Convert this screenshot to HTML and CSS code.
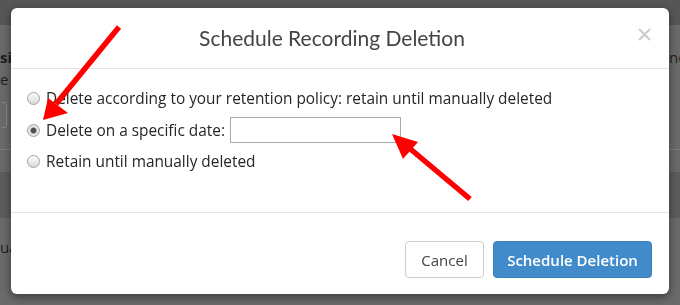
FILE: index.html
```html
<!DOCTYPE html>
<html lang="en">
<head>
<meta charset="utf-8">
<title>Schedule Recording Deletion</title>
<link rel="stylesheet" href="styles.css">
</head>
<body>
<div class="page">
  <div class="navbar"></div>
  <div class="section">
    <div class="row row-head"><span class="bold">sibility</span><span class="peek">nc</span></div>
    <div class="row row-sub"><span>e options</span></div>
    <div class="row row-field"><span class="fake-input"></span></div>
    <div class="rule"></div>
    <div class="band"></div>
    <div class="row row-foot"><span>ual</span></div>
  </div>
</div>

<div class="modal" role="dialog">
  <div class="modal-header">
    <h4 class="modal-title">Schedule Recording Deletion</h4>
    <button class="close" type="button" aria-label="Close">
      <svg viewBox="0 0 13 13" width="13" height="13"><path d="M1 1 L12 12 M12 1 L1 12" stroke="#cbcbcb" stroke-width="2" fill="none"/></svg>
    </button>
  </div>
  <div class="modal-body">
    <label class="opt"><input class="radio" type="radio" name="del"><span>Delete according to your retention policy: retain until manually deleted</span></label>
    <label class="opt opt-date"><input class="radio" type="radio" name="del" checked><span>Delete on a specific date:</span><input class="date" type="text"></label>
    <label class="opt"><input class="radio" type="radio" name="del"><span>Retain until manually deleted</span></label>
  </div>
  <div class="modal-footer">
    <button class="btn btn-default" type="button">Cancel</button>
    <button class="btn btn-primary" type="button">Schedule Deletion</button>
  </div>
</div>

<svg class="arrows" width="680" height="305" viewBox="0 0 680 305">
  <line x1="119" y1="27" x2="56" y2="104" stroke="#ff0000" stroke-width="5.5"/>
  <polygon points="43,120 48,98 68,113" fill="#ff0000"/>
  <line x1="470" y1="199" x2="408" y2="147" stroke="#ff0000" stroke-width="5.5"/>
  <polygon points="392,134 418,142 403,159" fill="#ff0000"/>
</svg>
</body>
</html>
```
FILE: styles.css
```css
html, body {
  margin: 0;
  padding: 0;
}
body {
  width: 680px;
  height: 305px;
  overflow: hidden;
  background: #6a6a6a;
  font-family: "Open Sans", Lato, sans-serif;
}

/* dimmed page behind the dialog */
.page {
  color: #1e1e1e;
  font-size: 15px;
}
.navbar {
  height: 25px;
  background: #565656;
}
.section {
  display: flex;
  flex-direction: column;
}
.row {
  display: flex;
  justify-content: space-between;
  white-space: nowrap;
}
.row-head {
  margin-top: 22px;
  line-height: 20px;
}
.bold {
  font-weight: 700;
}
.peek {
  width: 11px;
  overflow: hidden;
  color: #222;
}
.row-sub {
  line-height: 24px;
}
.row-field {
  margin-top: 11px;
}
.fake-input {
  display: block;
  width: 4px;
  height: 24px;
  margin-left: 2px;
  border: 1px solid #8a8a8a;
  border-left: none;
  border-radius: 0 3px 3px 0;
}
.rule {
  margin-top: 21px;
  height: 1px;
  background: #7c7c7c;
}
.band {
  margin-top: 22px;
  height: 46px;
  background: #5c5c5c;
}
.row-foot {
  margin-top: 19px;
  line-height: 20px;
}

/* dialog */
.modal {
  position: fixed;
  left: 11px;
  top: 8px;
  width: 658px;
  height: 286px;
  background: #fff;
  border-radius: 6px;
  box-shadow: 0 3px 10px rgba(0, 0, 0, 0.45);
  display: flex;
  flex-direction: column;
  color: #333;
}
.modal-header {
  height: 61px;
  box-sizing: border-box;
  border-bottom: 1px solid #e5e5e5;
  display: flex;
  align-items: flex-start;
  padding: 0 18px 0 15px;
}
.modal-title {
  flex: 1;
  margin: 0;
  padding-top: 16px;
  text-align: center;
  font-family: Lato, "Open Sans", sans-serif;
  font-size: 21px;
  font-weight: 400;
  line-height: 28px;
  color: #444;
}
.close {
  margin-top: 20px;
  padding: 0;
  border: 0;
  background: none;
  width: 13px;
  height: 13px;
  display: block;
}
.close svg {
  display: block;
}
.modal-body {
  flex: 1;
  padding: 18px 16px 0 16px;
  display: flex;
  flex-direction: column;
  gap: 4px;
}
.opt {
  display: flex;
  align-items: center;
  height: 22px;
  font-size: 15.4px;
  color: #262626;
  white-space: nowrap;
}
.opt-date {
  height: 30px;
  margin: 2px 0 1px;
}
.radio {
  -webkit-appearance: none;
  appearance: none;
  box-sizing: border-box;
  width: 13px;
  height: 13px;
  margin: 0 6px 0 0;
  border: 1px solid #a2a2a2;
  border-radius: 50%;
  background: linear-gradient(#fdfdfd, #d9d9d9);
  flex: none;
}
.radio:checked {
  background: radial-gradient(circle, #4d4d4d 0, #4d4d4d 2.2px, #bdbdbd 3.2px, #e8e8e8 4px, #d6d6d6 100%);
}
.date {
  box-sizing: border-box;
  width: 171px;
  height: 26px;
  margin: 0 0 0 5px;
  border: 1px solid #a9a9a9;
  background: #fff;
  font: inherit;
}
.modal-footer {
  height: 82px;
  box-sizing: border-box;
  border-top: 1px solid #e5e5e5;
  display: flex;
  justify-content: flex-end;
  align-items: flex-start;
  gap: 9px;
  padding: 28px 17px 0 0;
}
.btn {
  height: 37px;
  box-sizing: border-box;
  border-radius: 4px;
  font-family: "Open Sans", Lato, sans-serif;
  font-size: 15px;
  padding: 0;
  white-space: nowrap;
  cursor: pointer;
}
.btn-default {
  width: 79px;
  background: #fff;
  border: 1px solid #cccccc;
  color: #444;
}
.btn-primary {
  width: 159px;
  background: #428bca;
  border: 1px solid #3b7fba;
  color: #fff;
  font-weight: 600;
}

.arrows {
  position: fixed;
  left: 0;
  top: 0;
  pointer-events: none;
}
```
